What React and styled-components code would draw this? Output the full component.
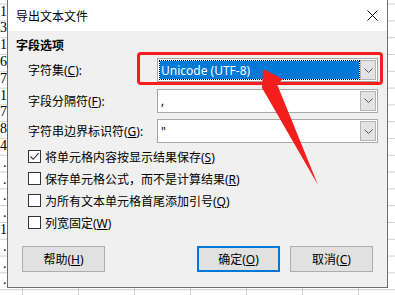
import React from "react";
import styled, { createGlobalStyle } from "styled-components";

const GlobalStyle = createGlobalStyle`
  html, body {
    margin: 0;
    padding: 0;
    width: 395px;
    height: 295px;
    overflow: hidden;
  }
  body {
    background-color: #fff;
    background-image:
      linear-gradient(to right, #d0d0d0 1px, transparent 1px),
      linear-gradient(to bottom, #d0d0d0 1px, transparent 1px);
    background-size: 56px 16.8px;
    background-position: 22px 3.6px;
    font-family: "Noto Sans", "Noto Sans CJK SC", sans-serif;
    color: #000;
  }
`;

const Page = styled.div`
  position: relative;
  display: flex;
  align-items: flex-start;
  width: 395px;
  height: 295px;
`;

const SheetStrip = styled.div`
  flex: none;
  width: 7px;
  padding-top: 3.6px;
  display: flex;
  flex-direction: column;
  overflow: hidden;
`;

const SheetCell = styled.div`
  height: 16.8px;
  line-height: 16.8px;
  font-family: "Liberation Serif", serif;
  font-size: 14px;
  text-align: right;
  padding-right: 0.5px;
  white-space: nowrap;
  color: #000;
`;

const Dialog = styled.div`
  flex: none;
  width: 381px;
  height: 288px;
  box-sizing: border-box;
  border: 1px solid #6e6e6e;
  border-top: none;
  background: #f0f0f0;
  display: flex;
  flex-direction: column;
`;

const TitleBar = styled.div`
  height: 31px;
  flex: none;
  background: #fff;
  display: flex;
  align-items: center;
  justify-content: space-between;
  padding: 0 9px 0 8px;
  font-size: 12px;
`;

const Content = styled.div`
  flex: 1;
  padding: 7px 9px 0 8px;
  display: flex;
  flex-direction: column;
`;

const Header = styled.div`
  font-size: 12px;
  font-weight: bold;
  line-height: 16px;
`;

const Form = styled.div`
  margin: 4px 0 0 12px;
  display: grid;
  grid-template-columns: 129px 221px;
  grid-auto-rows: 24px;
  row-gap: 6.5px;
`;

const Label = styled.div`
  font-size: 12px;
  align-self: center;
  white-space: nowrap;
`;

const Combo = styled.div`
  box-sizing: border-box;
  height: 24px;
  border: 1px solid #a8a8a8;
  background: #fff;
  padding: 1px;
  display: flex;
`;

const ComboValue = styled.div`
  flex: 1;
  display: flex;
  align-items: center;
  padding-left: 1px;
  font-size: 12px;
  border: 1px ${(p) => (p.$selected ? "dotted #000" : "solid transparent")};
  background: ${(p) => (p.$selected ? "#0078d7" : "#fff")};
  background-clip: padding-box;
  color: ${(p) => (p.$selected ? "#fff" : "#000")};
  white-space: nowrap;
`;

const DropButton = styled.div`
  flex: none;
  width: 16px;
  box-sizing: border-box;
  background: #e3e3e3;
  border: 1px solid #b4b4b4;
  display: flex;
  align-items: center;
  justify-content: center;
`;

const CheckList = styled.div`
  margin: 2.5px 0 0 12px;
  display: flex;
  flex-direction: column;
`;

const CheckRow = styled.div`
  height: 22px;
  display: flex;
  align-items: center;
  gap: 4px;
  font-size: 12px;
  white-space: nowrap;
`;

const Box = styled.div`
  width: 13px;
  height: 13px;
  box-sizing: border-box;
  border: 1px solid #333;
  background: #fff;
  display: flex;
  align-items: center;
  justify-content: center;
`;

const ButtonRow = styled.div`
  margin-top: 12.5px;
  padding: 0 5px 0 6px;
  display: flex;
  align-items: center;
  gap: 10px;
`;

const Spacer = styled.div`
  flex: 1;
`;

const Button = styled.div`
  width: 83px;
  height: 26px;
  box-sizing: border-box;
  background: #e1e1e1;
  border: ${(p) => (p.$default ? "2px solid #0078d7" : "1px solid #adadad")};
  display: flex;
  align-items: center;
  justify-content: center;
  font-size: 12px;
`;

const Key = styled.span`
  text-decoration: underline;
  text-underline-offset: 1px;
`;

const RedBox = styled.div`
  position: absolute;
  left: 137px;
  top: 52px;
  width: 246px;
  height: 33px;
  box-sizing: border-box;
  border: 3px solid #f41e1e;
  border-radius: 4px;
  pointer-events: none;
`;

const ArrowLayer = styled.svg`
  position: absolute;
  left: 0;
  top: 0;
  pointer-events: none;
`;

const Chevron = () => (
  <svg width="9" height="5" viewBox="0 0 9 5">
    <path d="M0.5 0.5 L4.5 4.5 L8.5 0.5" fill="none" stroke="#555" strokeWidth="1" />
  </svg>
);

const ComboBox = ({ value, selected }) => (
  <Combo>
    <ComboValue $selected={selected}>{value}</ComboValue>
    <DropButton>
      <Chevron />
    </DropButton>
  </Combo>
);

const Check = ({ checked, children }) => (
  <CheckRow>
    <Box>
      {checked && (
        <svg width="11" height="11" viewBox="0 0 11 11">
          <path d="M1.5 5.5 L4.2 8.3 L9.6 2.2" fill="none" stroke="#333" strokeWidth="1.1" />
        </svg>
      )}
    </Box>
    <span>{children}</span>
  </CheckRow>
);

const sheetValues = ["1", "3", "1", "6", "7", "1", "7", "8", "4", ".", ".", ".", ".", "1", ".", ".", "."];

export default function App() {
  return (
    <>
      <GlobalStyle />
      <Page>
        <SheetStrip>
          {sheetValues.map((v, i) => (
            <SheetCell key={i}>{v}</SheetCell>
          ))}
        </SheetStrip>
        <Dialog>
          <TitleBar>
            <span>导出文本文件</span>
            <svg width="11" height="11" viewBox="0 0 11 11">
              <path d="M0.5 0.5 L10.5 10.5 M10.5 0.5 L0.5 10.5" stroke="#000" strokeWidth="1" />
            </svg>
          </TitleBar>
          <Content>
            <Header>字段选项</Header>
            <Form>
              <Label>
                字符集(<Key>C</Key>):
              </Label>
              <ComboBox value="Unicode (UTF-8)" selected />
              <Label>
                字段分隔符(<Key>F</Key>):
              </Label>
              <ComboBox value="," />
              <Label>
                字符串边界标识符(<Key>G</Key>):
              </Label>
              <ComboBox value={'"'} />
            </Form>
            <CheckList>
              <Check checked>
                将单元格内容按显示结果保存(<Key>S</Key>)
              </Check>
              <Check>
                保存单元格公式，而不是计算结果(<Key>R</Key>)
              </Check>
              <Check>
                为所有文本单元格首尾添加引号(<Key>Q</Key>)
              </Check>
              <Check>
                列宽固定(<Key>W</Key>)
              </Check>
            </CheckList>
            <ButtonRow>
              <Button>
                帮助(<Key>H</Key>)
              </Button>
              <Spacer />
              <Button $default>
                确定(<Key>O</Key>)
              </Button>
              <Button>
                取消(<Key>C</Key>)
              </Button>
            </ButtonRow>
          </Content>
        </Dialog>
        <RedBox />
        <ArrowLayer width="395" height="295" viewBox="0 0 395 295">
          <path d="M263 69 L283 79 L277 84 L318 185 L265 93 L262 88 Z" fill="#f41e1e" />
        </ArrowLayer>
      </Page>
    </>
  );
}
